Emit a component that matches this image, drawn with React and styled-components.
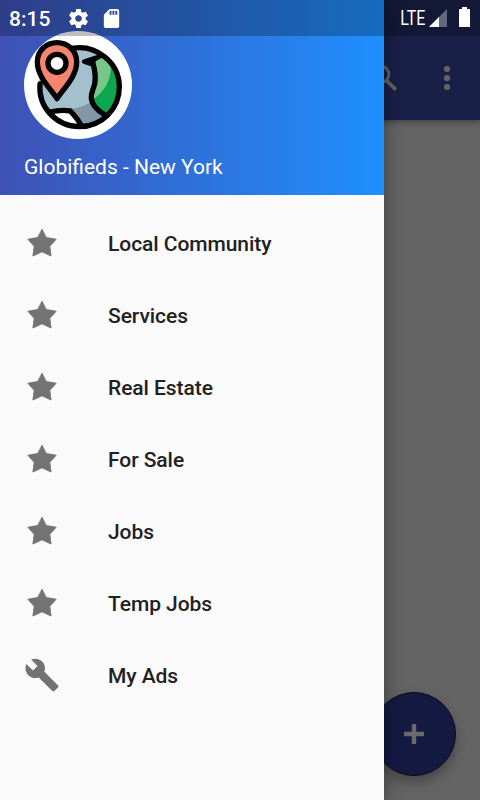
import React from 'react';
import styled, { createGlobalStyle } from 'styled-components';

const menuItems = [
  { id: 1, label: 'Local Community', icon: 'star' },
  { id: 2, label: 'Services', icon: 'star' },
  { id: 3, label: 'Real Estate', icon: 'star' },
  { id: 4, label: 'For Sale', icon: 'star' },
  { id: 5, label: 'Jobs', icon: 'star' },
  { id: 6, label: 'Temp Jobs', icon: 'star' },
  { id: 7, label: 'My Ads', icon: 'wrench' },
];

const StarIcon = () => (
  <svg width="36" height="36" viewBox="0 0 36 36" fill="#737373">
    <path
      d="M18 4.2L22.2 12.5L32.2 14.2L25.8 21.3L27.1 31L18 26.8L8.9 31L10.2 21.3L3.8 14.2L13.8 12.5Z"
      stroke="#737373"
      strokeWidth="0.9"
      strokeLinejoin="round"
    />
  </svg>
);

const WrenchIcon = () => (
  <svg width="36" height="36" viewBox="0 0 24 24" fill="#737373">
    <path d="M22.7 19l-9.1-9.1c.9-2.3.4-5-1.5-6.9-2-2-5-2.4-7.4-1.3L9 6 6 9 1.6 4.7C.4 7.1.9 10.1 2.9 12.1c1.9 1.9 4.6 2.4 6.9 1.5l9.1 9.1c.4.4 1 .4 1.4 0l2.3-2.3c.5-.4.5-1.1.1-1.4z" />
  </svg>
);

const GearIcon = () => (
  <svg width="23" height="23" viewBox="0 0 24 24" fill="#fff">
    <path d="M19.43 12.98c.04-.32.07-.64.07-.98s-.03-.66-.07-.98l2.11-1.65c.19-.15.24-.42.12-.64l-2-3.46c-.12-.22-.39-.3-.61-.22l-2.49 1c-.52-.4-1.08-.73-1.69-.98l-.38-2.65C14.46 2.18 14.25 2 14 2h-4c-.25 0-.46.18-.49.42l-.38 2.65c-.61.25-1.17.59-1.69.98l-2.49-1c-.23-.09-.49 0-.61.22l-2 3.46c-.13.22-.07.49.12.64l2.11 1.65c-.04.32-.07.65-.07.98s.03.66.07.98l-2.11 1.65c-.19.15-.24.42-.12.64l2 3.46c.12.22.39.3.61.22l2.49-1c.52.4 1.08.73 1.69.98l.38 2.65c.03.24.24.42.49.42h4c.25 0 .46-.18.49-.42l.38-2.65c.61-.25 1.17-.59 1.69-.98l2.49 1c.23.09.49 0 .61-.22l2-3.46c.12-.22.07-.49-.12-.64l-2.11-1.65zM12 15.5c-1.93 0-3.5-1.57-3.5-3.5s1.57-3.5 3.5-3.5 3.5 1.57 3.5 3.5-1.57 3.5-3.5 3.5z" />
  </svg>
);

const SdCardIcon = () => (
  <svg width="23" height="23" viewBox="0 0 24 24" fill="#fff">
    <path d="M18 2h-8L4.02 8 4 20c0 1.1.9 2 2 2h12c1.1 0 2-.9 2-2V4c0-1.1-.9-2-2-2zm-6 6h-2V4h2v4zm3 0h-2V4h2v4zm3 0h-2V4h2v4z" />
  </svg>
);

const SignalIcon = () => (
  <svg width="18" height="18" viewBox="0 0 18 18">
    <path d="M18 0V18H0Z" fill="#fff" fillOpacity="0.35" />
    <path d="M10 8V18H0Z" fill="#fff" />
  </svg>
);

const BatteryIcon = () => (
  <svg width="11" height="20" viewBox="0 0 11 20" fill="#fff">
    <path d="M3 0h5v2h2.4q.6 0 .6.6v16.8q0 .6-.6.6H.6q-.6 0-.6-.6V2.6Q0 2 .6 2H3Z" />
  </svg>
);

const SearchIcon = () => (
  <svg width="36" height="36" viewBox="0 0 36 36" fill="none" stroke="#646464">
    <circle cx="14.6" cy="14.3" r="8.3" strokeWidth="2.8" />
    <path d="M20 20L29.8 29.6" strokeWidth="3.6" />
  </svg>
);

const MoreIcon = () => (
  <svg width="36" height="36" viewBox="0 0 36 36" fill="#646464">
    <circle cx="18" cy="9" r="3.1" />
    <circle cx="18" cy="18" r="3.1" />
    <circle cx="18" cy="27" r="3.1" />
  </svg>
);

const PlusIcon = () => (
  <svg width="20" height="20" viewBox="0 0 20 20" fill="#6a6a6a">
    <rect x="0" y="7.8" width="20" height="4.4" rx="0.8" />
    <rect x="7.8" y="0" width="4.4" height="20" rx="0.8" />
  </svg>
);

const GlobeLogo = () => (
  <svg width="108" height="108" viewBox="24 21 324 324">
    <defs>
      <clipPath id="globe">
        <circle cx="190" cy="189" r="122" />
      </clipPath>
    </defs>
    <g clipPath="url(#globe)">
      <rect x="60" y="60" width="260" height="260" fill="#a4bfce" />
      <path d="M160 256C185 253 205 247 228 232L270 272L240 320H205Z" fill="#8197a5" />
      <path d="M100 264Q130 256 165 260L202 315H100Z" fill="#fff" />
      <path d="M252 98C280 112 310 150 309 190C308 222 290 256 266 272C238 255 218 236 226 212C236 195 243 160 230 126L232 106Z" fill="#7ac588" />
      <path d="M284 112C289 160 270 204 225 230C232 250 250 262 266 274L320 240V130Z" fill="#0ba750" />
    </g>
    <g fill="none" stroke="#000" strokeWidth="16" strokeLinejoin="round" strokeLinecap="round">
      <path d="M168 73C240 60 310 115 310 189C310 255 257 308 190 308C124 308 66 253 72 180" />
      <path d="M232 122C239 147 238 168 236 180C232 197 224 206 226 224C229 244 242 258 263 270" />
      <path d="M102 264Q135 256 163 261C176 275 190 291 195 305" />
    </g>
    <path
      d="M252 97L204 113L231 122L234 107Z"
      stroke="#000"
      strokeWidth="13"
      strokeLinejoin="round"
    />
    <path
      d="M123 224C103 193 64 158 64 114C64 79 91 56 123 56S182 79 182 114C182 158 143 193 123 224Z"
      fill="#f68470"
      stroke="#000"
      strokeWidth="16"
      strokeLinejoin="round"
    />
    <circle cx="123" cy="118" r="27" fill="#fff" stroke="#000" strokeWidth="16" />
  </svg>
);

const App = () => {
  return (
    <Screen>
      <GlobalStyle />
      <AppBar>
        <SearchIcon />
        <MoreIcon />
      </AppBar>
      <Content>
        <Fab>
          <PlusIcon />
        </Fab>
      </Content>
      <Drawer>
        <DrawerHeader>
          <Avatar>
            <GlobeLogo />
          </Avatar>
          <DrawerTitle>Globifieds - New York</DrawerTitle>
        </DrawerHeader>
        <Menu>
          {menuItems.map((item) => (
            <MenuItem key={item.id}>
              {item.icon === 'star' ? <StarIcon /> : <WrenchIcon />}
              <MenuLabel>{item.label}</MenuLabel>
            </MenuItem>
          ))}
        </Menu>
      </Drawer>
      <StatusBar>
        <StatusGroup $gap="10px">
          <Clock>8:15</Clock>
          <GearIcon />
          <SdCardIcon />
        </StatusGroup>
        <StatusGroup $gap="4px">
          <Network>LTE</Network>
          <SignalIcon />
          <BatterySlot>
            <BatteryIcon />
          </BatterySlot>
        </StatusGroup>
      </StatusBar>
    </Screen>
  );
};

export default App;

// Styled Components
const GlobalStyle = createGlobalStyle`
  * {
    box-sizing: border-box;
  }

  body {
    margin: 0;
    font-family: Roboto, sans-serif;
  }

  svg {
    display: block;
    flex-shrink: 0;
  }
`;

const Screen = styled.div`
  position: relative;
  display: flex;
  flex-direction: column;
  width: 480px;
  height: 800px;
  overflow: hidden;
  background: #646464;
`;

const AppBar = styled.header`
  display: flex;
  align-items: center;
  justify-content: flex-end;
  gap: 27px;
  height: 120px;
  padding: 36px 15px 0 0;
  background: #192048;
  box-shadow: 0 2px 6px rgba(0, 0, 0, 0.35);
`;

const Content = styled.main`
  display: flex;
  flex: 1;
  align-items: flex-end;
  justify-content: flex-end;
  padding: 24px;
`;

const Fab = styled.button`
  display: flex;
  align-items: center;
  justify-content: center;
  width: 84px;
  height: 84px;
  padding: 0;
  border: 1px solid #080a1a;
  border-radius: 50%;
  background: #141a42;
  box-shadow: 0 6px 12px rgba(0, 0, 0, 0.3);
`;

const Drawer = styled.aside`
  position: absolute;
  top: 0;
  left: 0;
  width: 384px;
  height: 100%;
  background: #fafafa;
  box-shadow: 0 0 18px rgba(0, 0, 0, 0.4);
`;

const DrawerHeader = styled.div`
  display: flex;
  flex-direction: column;
  height: 195px;
  padding: 31px 24px 0;
  background: linear-gradient(90deg, #3f51b5, #1e90ff);
`;

const Avatar = styled.div`
  width: 108px;
  height: 108px;
  border-radius: 50%;
  overflow: hidden;
  background: #fff;
`;

const DrawerTitle = styled.div`
  margin-top: 16px;
  color: #fff;
  font-size: 21px;
  line-height: 25px;
`;

const Menu = styled.nav`
  padding-top: 12px;
`;

const MenuItem = styled.div`
  display: flex;
  align-items: center;
  gap: 48px;
  height: 72px;
  padding: 0 24px;
`;

const MenuLabel = styled.span`
  padding-top: 2px;
  color: #212121;
  font-size: 21px;
  font-weight: 500;
  letter-spacing: -0.06px;
`;

const StatusBar = styled.div`
  position: absolute;
  top: 0;
  left: 0;
  display: flex;
  align-items: center;
  justify-content: space-between;
  width: 100%;
  height: 36px;
  padding: 0 10px 0 9px;
  background: rgba(0, 0, 0, 0.25);
  color: #fff;
`;

const StatusGroup = styled.div`
  display: flex;
  align-items: center;
  gap: ${(props) => props.$gap};
`;

const Clock = styled.span`
  margin-right: 7px;
  padding-top: 2px;
  font-size: 21px;
  font-weight: 500;
`;

const Network = styled.span`
  padding-bottom: 1px;
  font-size: 20px;
  transform: scaleX(0.8);
  transform-origin: right center;
`;

const BatterySlot = styled.div`
  padding: 0 0 2px 8px;
`;
